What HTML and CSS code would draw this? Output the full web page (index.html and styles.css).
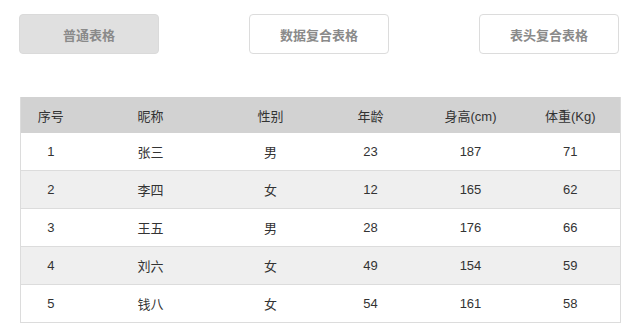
FILE: index.html
```html
<!DOCTYPE html>
<html lang="zh-CN">
<head>
<meta charset="utf-8">
<title>表格</title>
<link rel="stylesheet" href="styles.css">
</head>
<body>
<div class="page">
  <div class="tabs">
    <button class="tab active">普通表格</button>
    <button class="tab">数据复合表格</button>
    <button class="tab">表头复合表格</button>
  </div>
  <table class="grid">
    <colgroup>
      <col class="c1"><col class="c2"><col class="c3"><col class="c3"><col class="c3"><col class="c3">
    </colgroup>
    <thead>
      <tr><th>序号</th><th>昵称</th><th>性别</th><th>年龄</th><th>身高(cm)</th><th>体重(Kg)</th></tr>
    </thead>
    <tbody>
      <tr><td>1</td><td>张三</td><td>男</td><td>23</td><td>187</td><td>71</td></tr>
      <tr><td>2</td><td>李四</td><td>女</td><td>12</td><td>165</td><td>62</td></tr>
      <tr><td>3</td><td>王五</td><td>男</td><td>28</td><td>176</td><td>66</td></tr>
      <tr><td>4</td><td>刘六</td><td>女</td><td>49</td><td>154</td><td>59</td></tr>
      <tr><td>5</td><td>钱八</td><td>女</td><td>54</td><td>161</td><td>58</td></tr>
    </tbody>
  </table>
</div>
</body>
</html>
```
FILE: styles.css
```css
html, body {
  margin: 0;
  padding: 0;
  background: #fff;
}
body {
  font-family: "Liberation Sans", "Noto Sans CJK SC", sans-serif;
  font-size: 13px;
  color: #333;
}
.page {
  padding: 14px 0 0 19px;
}
.tabs {
  display: flex;
  gap: 90px;
}
.tab {
  width: 140px;
  height: 40px;
  box-sizing: border-box;
  border: 1px solid #dcdcdc;
  border-radius: 4px;
  background: #fff;
  color: #8a8a8a;
  font-family: "Liberation Sans", "Noto Sans CJK SC", sans-serif;
  font-size: 13px;
  font-weight: bold;
  padding: 0;
}
.tab.active {
  background: #e0e0e0;
  border-color: #dadada;
}
.grid {
  margin: 43px 0 0 1px;
  width: 600px;
  border-collapse: collapse;
  table-layout: fixed;
  border-left: 1px solid #dcdcdc;
  border-right: 1px solid #dcdcdc;
}
.c1 { width: 60px; }
.c2 { width: 140px; }
.c3 { width: 100px; }
.grid th {
  height: 36px;
  background: #d2d2d2;
  font-weight: normal;
  text-align: center;
  padding: 0;
  color: #333;
}
.grid td {
  height: 37px;
  text-align: center;
  padding: 0;
  border-bottom: 1px solid #dcdcdc;
}
.grid tbody tr:nth-child(even) td {
  background: #efefef;
}
```
